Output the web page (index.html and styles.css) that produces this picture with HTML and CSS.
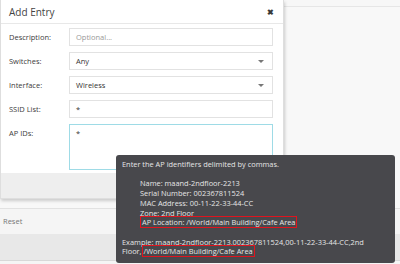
FILE: index.html
```html
<!DOCTYPE html>
<html>
<head>
    <title>Add Entry</title>
    <link rel="stylesheet" href="styles.css">
</head>
<body>
    <div class="page">
        <div class="topbar"></div>
        <div class="page-body"></div>
        <div class="reset-bar">Reset</div>
        <div class="footer-bar"></div>
    </div>

    <div class="modal">
        <div class="modal-header">
            <h2>Add Entry</h2>
            <span class="close">&#10006;</span>
        </div>
        <div class="modal-body">
            <div class="form-row">
                <label>Description:</label>
                <div class="field placeholder">Optional...</div>
            </div>
            <div class="form-row">
                <label>Switches:</label>
                <div class="field select">Any<span class="caret"></span></div>
            </div>
            <div class="form-row">
                <label>Interface:</label>
                <div class="field select">Wireless<span class="caret"></span></div>
            </div>
            <div class="form-row">
                <label>SSID List:</label>
                <div class="field">*</div>
            </div>
            <div class="form-row">
                <label>AP IDs:</label>
                <div class="field textarea">*</div>
            </div>
        </div>
        <div class="modal-footer"></div>
    </div>

    <div class="tooltip">
        <p>Enter the AP identifiers delimited by commas.</p>
        <div class="sample">
            <div>Name: maand-2ndfloor-2213</div>
            <div>Serial Number: 002367811524</div>
            <div>MAC Address: 00-11-22-33-44-CC</div>
            <div>Zone: 2nd Floor</div>
            <div><span class="mark">AP Location: /World/Main Building/Cafe Area</span></div>
        </div>
        <p>Example: maand-2ndfloor-2213,002367811524,00-11-22-33-44-CC,2nd Floor,<span class="mark">/World/Main Building/Cafe Area</span></p>
    </div>
</body>
</html>
```

FILE: styles.css
```css
body {
    margin: 0;
    font-family: "Open Sans", Arial, sans-serif;
    background-color: #f5f5f5;
    overflow: hidden;
}
.page {
    height: 264px;
    display: flex;
    flex-direction: column;
}
.topbar {
    height: 6px;
    border-bottom: 1px solid #e6e6e6;
    background: #f7f7f7;
}
.page-body {
    height: 201px;
    border-bottom: 1px solid #e2e2e2;
    background: #f8f8f8;
}
.reset-bar {
    height: 25px;
    line-height: 25px;
    padding-left: 3px;
    font-size: 7.5px;
    color: #777;
    background: #f5f5f5;
}
.footer-bar {
    height: 26px;
    background: #e8e8e8;
    border-bottom: 1px solid #d8d8d8;
}
.modal {
    position: absolute;
    top: 0;
    left: 0;
    width: 282px;
    background: white;
    border: 1px solid #dedede;
    border-top: none;
    box-shadow: 1px 2px 3px rgba(0,0,0,0.18);
}
.modal-header {
    height: 24px;
    display: flex;
    align-items: center;
    justify-content: space-between;
    padding: 0 9px 0 8px;
    border-bottom: 1px solid #e8e8e8;
    box-sizing: border-box;
}
.modal-header h2 {
    margin: 0;
    font-size: 10px;
    font-weight: normal;
    color: #444;
}
.close {
    font-size: 7.5px;
    font-weight: bold;
    color: #3a3a3a;
}
.modal-body {
    padding: 4px 10px 3px 8px;
    display: flex;
    flex-direction: column;
    gap: 6px;
}
.form-row {
    display: flex;
    align-items: flex-start;
}
label {
    width: 60px;
    font-size: 7.5px;
    color: #3c3c3c;
    line-height: 18px;
}
.field {
    flex: 1;
    height: 18px;
    box-sizing: border-box;
    border: 1px solid #e2e2e2;
    padding: 0 6px;
    font-size: 7.5px;
    line-height: 16px;
    color: #333;
    display: flex;
    justify-content: space-between;
    align-items: center;
}
.placeholder {
    color: #999;
}
.caret {
    width: 0;
    height: 0;
    border-left: 3px solid transparent;
    border-right: 3px solid transparent;
    border-top: 3px solid #777;
    margin-right: 2px;
}
.textarea {
    height: 46px;
    align-items: flex-start;
    border-color: #9edbe6;
}
.modal-footer {
    height: 25px;
    background: #eeeeee;
}
.tooltip {
    position: absolute;
    left: 116px;
    top: 155px;
    width: 267px;
    padding: 5px 6px 6px 6px;
    background: #48484c;
    border-radius: 3px;
    color: #e6e6e6;
    font-size: 7.4px;
    line-height: 9.7px;
}
.tooltip p {
    margin: 0;
}
.sample {
    margin: 9.7px 0 9.7px 18px;
}
.mark {
    border: 1.5px solid #e0141e;
    padding: 0 1px;
}
```
